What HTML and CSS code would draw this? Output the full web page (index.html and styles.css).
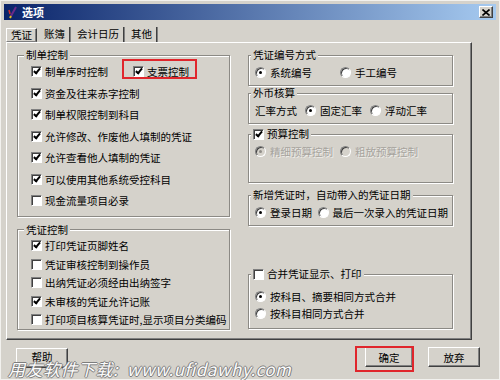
FILE: index.html
```html
<!DOCTYPE html>
<html lang="zh-CN">
  <head>
    <meta charset="UTF-8" />
    <title>选项</title>
    <link rel="stylesheet" href="styles.css">
  </head>

  <body>
    <div class="window">
      <div class="titlebar">
        <svg class="appicon" width="10" height="13" viewBox="0 0 10 13">
          <path d="M8 1 L3 10" stroke="#6a2a8a" stroke-width="2" />
          <path d="M3 10 L2 12" stroke="#e8c020" stroke-width="2" />
          <path d="M1 4 L2 8" stroke="#d03030" stroke-width="1.5" />
        </svg>
        <span class="title">选项</span>
        <span class="close">
          <svg width="8" height="7" viewBox="0 0 8 7">
            <path d="M0.5 0.5 L7.5 6.5 M7.5 0.5 L0.5 6.5" stroke="#000" stroke-width="1.6" />
          </svg>
        </span>
      </div>

      <div class="tabs">
        <div class="tab active">凭证</div>
        <div class="tab">账簿</div>
        <div class="tab">会计日历</div>
        <div class="tab">其他</div>
      </div>

      <div class="panel">
        <div class="col col-left">
          <fieldset class="group g-zhidan">
            <legend>制单控制</legend>
            <div class="row">
              <label class="item first"><i class="cb on"></i>制单序时控制</label>
              <label class="item mark"><i class="cb on"></i>支票控制</label>
            </div>
            <div class="row"><label class="item"><i class="cb on"></i>资金及往来赤字控制</label></div>
            <div class="row"><label class="item"><i class="cb on"></i>制单权限控制到科目</label></div>
            <div class="row"><label class="item"><i class="cb on"></i>允许修改、作废他人填制的凭证</label></div>
            <div class="row"><label class="item"><i class="cb on"></i>允许查看他人填制的凭证</label></div>
            <div class="row"><label class="item"><i class="cb on"></i>可以使用其他系统受控科目</label></div>
            <div class="row"><label class="item"><i class="cb"></i>现金流量项目必录</label></div>
          </fieldset>

          <fieldset class="group g-pingzheng">
            <legend>凭证控制</legend>
            <div class="row"><label class="item"><i class="cb on"></i>打印凭证页脚姓名</label></div>
            <div class="row"><label class="item"><i class="cb"></i>凭证审核控制到操作员</label></div>
            <div class="row"><label class="item"><i class="cb"></i>出纳凭证必须经由出纳签字</label></div>
            <div class="row"><label class="item"><i class="cb on"></i>未审核的凭证允许记账</label></div>
            <div class="row"><label class="item"><i class="cb"></i>打印项目核算凭证时,显示项目分类编码</label></div>
          </fieldset>
        </div>

        <div class="col col-right">
          <fieldset class="group g-bianhao">
            <legend>凭证编号方式</legend>
            <div class="row">
              <label class="item w85"><i class="rb on"></i>系统编号</label>
              <label class="item"><i class="rb"></i>手工编号</label>
            </div>
          </fieldset>

          <fieldset class="group g-waibi">
            <legend>外币核算</legend>
            <div class="row gap8">
              <span>汇率方式</span>
              <label class="item"><i class="rb on"></i>固定汇率</label>
              <label class="item"><i class="rb"></i>浮动汇率</label>
            </div>
          </fieldset>

          <fieldset class="group g-yusuan">
            <legend class="check-legend"><i class="cb on"></i>预算控制</legend>
            <div class="row">
              <label class="item w85 disabled"><i class="rb on"></i>精细预算控制</label>
              <label class="item disabled"><i class="rb"></i>粗放预算控制</label>
            </div>
          </fieldset>

          <fieldset class="group g-xinzeng">
            <legend>新增凭证时，自动带入的凭证日期</legend>
            <div class="row">
              <label class="item w66"><i class="rb on"></i>登录日期</label>
              <label class="item"><i class="rb"></i>最后一次录入的凭证日期</label>
            </div>
          </fieldset>

          <fieldset class="group g-hebing">
            <legend class="check-legend"><i class="cb"></i>合并凭证显示、打印</legend>
            <div class="row"><label class="item"><i class="rb on"></i>按科目、摘要相同方式合并</label></div>
            <div class="row"><label class="item"><i class="rb"></i>按科目相同方式合并</label></div>
          </fieldset>
        </div>
      </div>

      <div class="footer">
        <button class="btn btn-help">帮助</button>
        <div class="spacer"></div>
        <button class="btn btn-ok mark-btn">确定</button>
        <button class="btn">放弃</button>
      </div>

      <div class="watermark">用友软件下载:&nbsp; www.ufidawhy.com</div>
    </div>
  </body>
</html>
```

FILE: styles.css
```css
body {
  margin: 0;
  font-family: "Noto Sans CJK SC", "Liberation Sans", sans-serif;
  font-size: 10.5px;
  color: #000;
}

.window {
  position: relative;
  width: 500px;
  height: 380px;
  box-sizing: border-box;
  padding: 3px;
  background: #d5d2cb;
  border: 1px solid #f2f1ee;
  display: flex;
  flex-direction: column;
}

.titlebar {
  height: 16px;
  display: flex;
  align-items: center;
  background: linear-gradient(90deg, #0a246a 0%, #a6caf0 100%);
}

.appicon {
  margin-left: 4px;
}

.title {
  margin-left: 4px;
  color: #fff;
  font-weight: bold;
  font-size: 11px;
}

.close {
  margin-left: auto;
  margin-right: 3px;
  width: 14px;
  height: 12px;
  box-sizing: border-box;
  background: #d5d2cb;
  border: 1px solid;
  border-color: #fff #404040 #404040 #fff;
  box-shadow: inset -1px -1px #808080;
  display: flex;
  align-items: center;
  justify-content: center;
}

.tabs {
  display: flex;
  margin-top: 7px;
  margin-left: 2px;
  height: 15px;
}

.tab {
  padding: 0 4px;
  line-height: 14px;
  margin-right: 3px;
  border-right: 1px solid #404040;
  box-shadow: 1px 0 #808080;
}

.tab.active {
  border: 1px solid;
  border-color: #fff #404040 #808080 #fff;
  box-shadow: inset -1px 0 #808080;
  line-height: 12px;
  margin-top: 1px;
}

.panel {
  width: 466px;
  height: 298px;
  box-sizing: border-box;
  margin-left: 2px;
  border: 1px solid;
  border-color: #fff #404040 #404040 #fff;
  box-shadow: inset -1px -1px #808080;
  padding: 6px 0 0 10px;
  display: flex;
  gap: 18px;
}

.col {
  display: flex;
  flex-direction: column;
}

.col-left {
  width: 213px;
}

.col-right {
  width: 205px;
}

.group {
  margin: 0;
  min-width: 0;
  border: 1px solid #8c8a85;
  box-shadow: inset 1px 1px #fff, 1px 1px #fff;
}

.group legend {
  padding: 0 2px;
  line-height: 12px;
  height: 12px;
  background: #d5d2cb;
}

.col-left .group {
  padding: 0 4px 4px 13px;
}

.col-left .group legend {
  margin-left: -7px;
}

.col-right .group {
  padding: 2px 4px 4px 6px;
}

.col-right .group legend {
  margin-left: -4px;
}

.g-zhidan .row {
  height: 21.5px;
}

.g-pingzheng {
  margin-top: 7px !important;
  padding-top: 1px !important;
  padding-bottom: 0 !important;
}

.g-pingzheng .row {
  height: 18.5px;
}

.col-right .row {
  height: 18px;
}

.g-waibi {
  margin-top: 1px !important;
}

.g-yusuan {
  margin-top: 4px !important;
  padding-bottom: 22px !important;
}

.g-xinzeng {
  margin-top: 6px !important;
}

.g-hebing {
  margin-top: 42px !important;
  padding-top: 8px !important;
  padding-bottom: 6px !important;
}

.g-hebing .row {
  height: 17px;
}

.row {
  display: flex;
  align-items: center;
  white-space: nowrap;
}

.gap8 {
  gap: 8px;
}

.item {
  display: inline-flex;
  align-items: center;
  gap: 3px;
}

.col-right .item {
  gap: 4px;
}

.item.first {
  width: 102px;
}

.w85 {
  width: 85px;
}

.w66 {
  width: 66px;
}

.check-legend {
  display: flex;
  align-items: center;
  gap: 3px;
}

.cb {
  position: relative;
  flex: none;
  width: 11px;
  height: 11px;
  box-sizing: border-box;
  border: 1px solid;
  border-color: #808080 #fff #fff #808080;
  box-shadow: inset 1px 1px #404040;
  background: #fff;
}

.cb.on::after {
  content: "";
  position: absolute;
  left: 3px;
  top: 0px;
  width: 2px;
  height: 5px;
  border: solid #000;
  border-width: 0 2px 2px 0;
  transform: rotate(40deg);
}

.rb {
  position: relative;
  flex: none;
  width: 11px;
  height: 11px;
  box-sizing: border-box;
  border-radius: 50%;
  border: 1px solid;
  border-color: #808080 #fff #fff #808080;
  box-shadow: inset 1px 1px #404040;
  background: #fff;
}

.rb.on::after {
  content: "";
  position: absolute;
  left: 3px;
  top: 3px;
  width: 3px;
  height: 3px;
  border-radius: 50%;
  background: #000;
}

.disabled {
  color: #a6a39d;
  text-shadow: 1px 1px #eeede9;
}

.disabled .rb {
  background: #d5d2cb;
}

.disabled .rb.on::after {
  background: #908d88;
}

.mark {
  position: relative;
}

.mark::after {
  content: "";
  position: absolute;
  top: -5px;
  right: -8px;
  bottom: 0;
  left: -11px;
  border: 2px solid #e0262c;
}

.footer {
  display: flex;
  margin-top: 7px;
  padding: 0 16px 0 12px;
}

.spacer {
  flex: 1;
}

.btn {
  width: 52px;
  height: 20px;
  padding: 0;
  font: inherit;
  color: #000;
  background: #d5d2cb;
  border: 1px solid;
  border-color: #fff #404040 #404040 #fff;
  box-shadow: inset -1px -1px #808080;
}

.btn-help {
  margin-top: 1px;
  padding-bottom: 3px;
}

.btn-ok {
  width: 48px;
  margin-right: 15px;
}

.mark-btn {
  position: relative;
}

.mark-btn::after {
  content: "";
  position: absolute;
  top: -2px;
  right: -2px;
  bottom: -6px;
  left: -11px;
  border: 2px solid #e0262c;
}

.watermark {
  position: absolute;
  left: 7px;
  top: 355px;
  font-size: 17px;
  font-style: italic;
  letter-spacing: 0.5px;
  color: #fbfbfb;
  text-shadow: 1px 0 #7d7d7d, -1px 0 #7d7d7d, 0 1px #7d7d7d, 0 -1px #7d7d7d;
  white-space: nowrap;
}
```
